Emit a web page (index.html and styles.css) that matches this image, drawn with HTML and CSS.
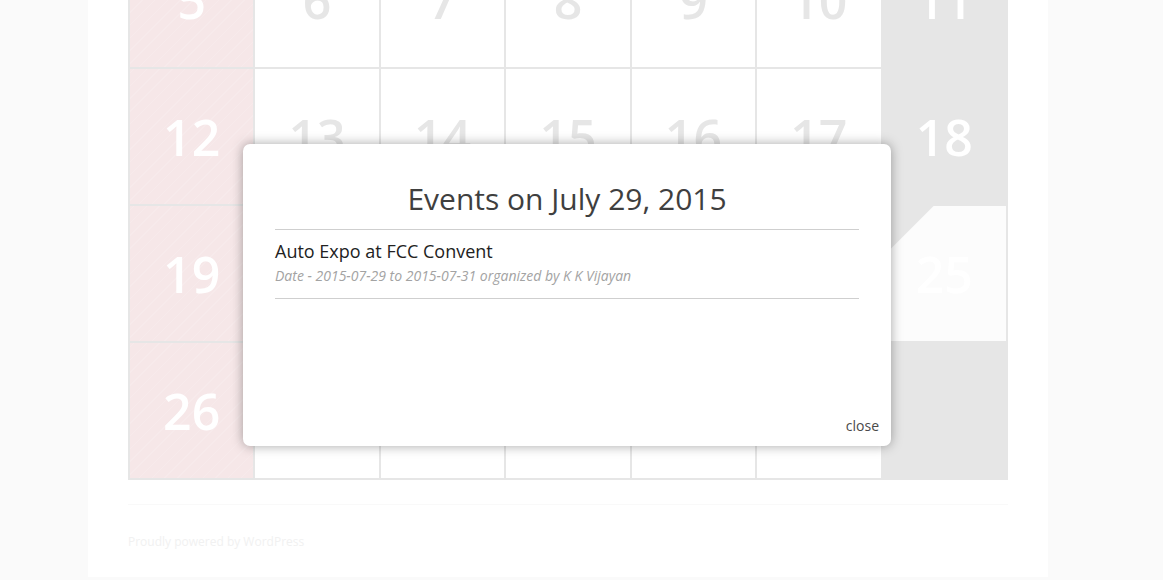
FILE: index.html
```html
<!DOCTYPE html>
<html lang="en">
<head>
<meta charset="utf-8">
<title>Events calendar</title>
<link rel="stylesheet" href="styles.css">
</head>
<body>
<div class="page">
  <div class="calendar">
    <div class="cell sun">5</div>
    <div class="cell">6</div>
    <div class="cell">7</div>
    <div class="cell">8</div>
    <div class="cell">9</div>
    <div class="cell">10</div>
    <div class="cell sat">11</div>

    <div class="cell sun">12</div>
    <div class="cell">13</div>
    <div class="cell">14</div>
    <div class="cell">15</div>
    <div class="cell">16</div>
    <div class="cell">17</div>
    <div class="cell sat">18</div>

    <div class="cell sun">19</div>
    <div class="cell">20</div>
    <div class="cell">21</div>
    <div class="cell">22</div>
    <div class="cell">23</div>
    <div class="cell">24</div>
    <div class="cell sat"><div class="today">25</div></div>

    <div class="cell sun">26</div>
    <div class="cell">27</div>
    <div class="cell">28</div>
    <div class="cell">29</div>
    <div class="cell">30</div>
    <div class="cell">31</div>
    <div class="cell sat"></div>
  </div>

  <footer class="footer">
    <p class="credit">Proudly powered by WordPress</p>
  </footer>

  <div class="modal">
    <div class="modal-body">
      <h2 class="modal-title">Events on July 29, 2015</h2>
      <div class="event">
        <h3 class="event-title">Auto Expo at FCC Convent</h3>
        <p class="event-meta">Date - 2015-07-29 to 2015-07-31 organized by K K Vijayan</p>
      </div>
    </div>
    <div class="modal-foot"><a class="close">close</a></div>
  </div>
</div>
</body>
</html>
```

FILE: styles.css
```css
html, body {
  margin: 0;
  padding: 0;
}

body {
  background: #fafafa;
  font-family: "Open Sans", "DejaVu Sans", sans-serif;
  height: 580px;
  overflow: hidden;
}

.page {
  position: relative;
  box-sizing: border-box;
  width: 960px;
  height: 577px;
  margin-left: 88px;
  padding: 0 40px;
  background: #ffffff;
  display: flex;
  flex-direction: column;
}

.calendar {
  margin-top: -70px;
  width: 880px;
  display: grid;
  grid-template-columns: repeat(7, 1fr);
  grid-auto-rows: 135px;
  gap: 2px;
  padding: 2px;
  box-sizing: border-box;
  background: #e6e6e6;
}

.cell {
  background: #ffffff;
  color: #e6e6e6;
  font-size: 50px;
  font-weight: 600;
  display: flex;
  align-items: center;
  justify-content: center;
  line-height: 1;
}

.cell.sun {
  color: #ffffff;
  background-color: #f6e7e8;
  background-image: repeating-linear-gradient(-45deg,
    rgba(255, 255, 255, 0) 0px,
    rgba(255, 255, 255, 0) 8px,
    rgba(255, 255, 255, 0.14) 8px,
    rgba(255, 255, 255, 0.14) 9px);
}

.cell.sat {
  color: #ffffff;
  background: #e6e6e6;
  position: relative;
}

.today {
  align-self: stretch;
  flex: 1;
  display: flex;
  align-items: center;
  justify-content: center;
  background: #fcfcfc;
  color: #ffffff;
  clip-path: polygon(51px 0, 100% 0, 100% 100%, 0 100%, 0 51px);
}

.footer {
  margin-top: 24px;
  border-top: 1px solid #f9f9f9;
  width: 880px;
}

.credit {
  margin: 27px 0 0;
  font-size: 12px;
  line-height: 20px;
  color: #f1f1f1;
}

.modal {
  position: absolute;
  left: 155px;
  top: 144px;
  width: 648px;
  height: 302px;
  box-sizing: border-box;
  background: #ffffff;
  border-radius: 7px;
  box-shadow: 0 0 12px rgba(0, 0, 0, 0.35);
  padding: 35px 0 10px;
  display: flex;
  flex-direction: column;
}

.modal-body {
  padding: 0 32px;
}

.modal-title {
  margin: 0 0 10px;
  font-size: 30px;
  line-height: 40px;
  font-weight: 400;
  color: #3f3f3f;
  text-align: center;
}

.event {
  border-top: 1px solid #cfcfcf;
  border-bottom: 1px solid #cfcfcf;
  padding: 9px 0 12px;
}

.event-title {
  margin: 0 0 3px;
  font-size: 18px;
  line-height: 24px;
  font-weight: 400;
  color: #222222;
}

.event-meta {
  margin: 0;
  font-size: 14px;
  line-height: 20px;
  font-style: italic;
  color: #a3a3a3;
}

.modal-foot {
  margin-top: auto;
  padding-right: 12px;
  display: flex;
  justify-content: flex-end;
}

.close {
  font-size: 14px;
  line-height: 20px;
  color: #4a4a4a;
  cursor: pointer;
}
```
